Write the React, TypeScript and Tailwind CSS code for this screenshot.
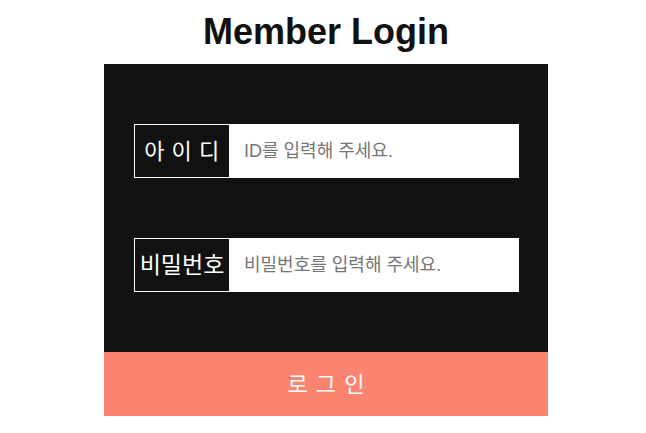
export default function App() {
  const font = { fontFamily: '"Liberation Sans", "Noto Sans CJK KR", sans-serif' };
  return (
    <div className="w-[646px] h-[433px] bg-white" style={font}>
      <div className="w-[444px] ml-[104px]">
        <div className="h-[64px] flex items-center justify-center">
          <h2 className="text-[36px] font-bold text-[#111] leading-none">Member Login</h2>
        </div>
        <div className="bg-[#111111] pl-[30px] pr-[29px] pt-[60px] pb-[60px] flex flex-col gap-[60px]">
          <div className="flex h-[54px]">
            <div className="w-[96px] border border-white flex items-center justify-center text-white text-[22px] tracking-[0.5px] whitespace-nowrap">
              아 이 디
            </div>
            <input
              className="flex-1 bg-white pl-[14px] text-[18px] outline-none placeholder:text-[#757575]"
              placeholder="ID를 입력해 주세요."
            />
          </div>
          <div className="flex h-[54px]">
            <div className="w-[96px] border border-white flex items-center justify-center text-white text-[23px] whitespace-nowrap">
              비밀번호
            </div>
            <input
              type="password"
              className="flex-1 bg-white pl-[14px] text-[18px] outline-none placeholder:text-[#757575]"
              placeholder="비밀번호를 입력해 주세요."
            />
          </div>
        </div>
        <button className="w-full h-[64px] bg-[#fa8470] text-white text-[22px] [word-spacing:2px] flex items-center justify-center">
          로 그 인
        </button>
      </div>
    </div>
  );
}
